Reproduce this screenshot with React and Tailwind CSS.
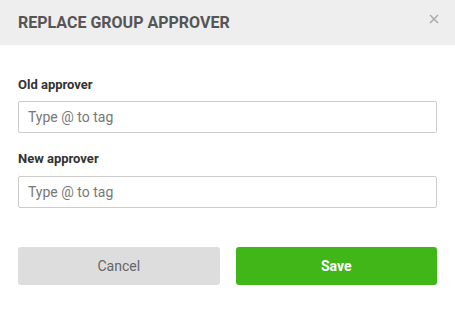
import React from 'react'

export default function App() {
  return (
    <div className="w-[455px] h-[310px] bg-white font-['Roboto',sans-serif]">
      {/* Header */}
      <div className="h-[45px] bg-[#eeeeee] flex items-center justify-between pl-[18px] pr-[16px]">
        <h2 className="text-[16px] font-bold text-[#555555] uppercase">Replace group approver</h2>
        <button className="mb-[7px]">
          <svg width="10" height="10" viewBox="0 0 10 10" fill="none" stroke="#aaaaaa" strokeWidth="1.5">
            <path d="M1 1L9 9M9 1L1 9" />
          </svg>
        </button>
      </div>

      {/* Form */}
      <div className="px-[18px] pt-[32px]">
        <label className="block text-[13px] leading-[16px] font-bold text-[#333333] mb-[8px]">Old approver</label>
        <input
          type="text"
          placeholder="Type @ to tag"
          className="w-full h-[32px] border border-[#cccccc] rounded-[2px] px-[9px] text-[14px] text-[#333333] placeholder:text-[#777777] outline-none"
        />
        <label className="block text-[13px] leading-[16px] font-bold text-[#333333] mt-[18px] mb-[9px]">New approver</label>
        <input
          type="text"
          placeholder="Type @ to tag"
          className="w-full h-[32px] border border-[#cccccc] rounded-[2px] px-[9px] text-[14px] text-[#333333] placeholder:text-[#777777] outline-none"
        />

        <div className="flex gap-[16px] mt-[39px]">
          <button className="flex-1 h-[38px] rounded-[3px] bg-[#dddddd] text-[14px] text-[#666666]">Cancel</button>
          <button className="flex-1 h-[38px] rounded-[3px] bg-[#41b619] text-[14px] font-bold text-white">Save</button>
        </div>
      </div>
    </div>
  )
}
